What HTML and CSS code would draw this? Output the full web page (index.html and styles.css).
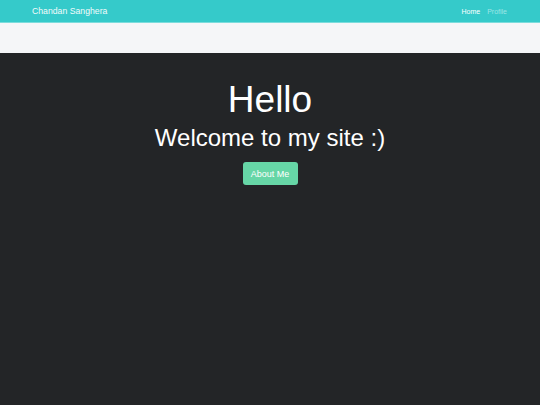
FILE: index.html
```html
<!DOCTYPE html>
<html lang="en">
<head>
    <meta charset="UTF-8">
    <meta name="viewport" content="width=device-width, initial-scale=1.0">
    <title>Chandan Sanghera</title>
    <link rel="stylesheet" href="styles.css">
</head>
<body>

<nav class="navbar">
    <a class="brand" href="#">Chandan Sanghera</a>
    <div class="nav-links">
        <a class="nav-link active" href="#">Home</a>
        <a class="nav-link" href="#">Profile</a>
    </div>
</nav>

<div class="subbar"></div>

<main class="hero">
    <h1>Hello</h1>
    <h2>Welcome to my site :)</h2>
    <button class="about-btn">About Me</button>
</main>

</body>
</html>
```

FILE: styles.css
```css
html, body {
    height: 100%;
}
body {
    margin: 0;
    font-family: 'Liberation Sans', Arial, sans-serif;
    background-color: #232527;
    display: flex;
    flex-direction: column;
}
.navbar {
    background-color: #35caca;
    height: 22px;
    display: flex;
    align-items: center;
    justify-content: space-between;
    padding: 0 33px 0 32px;
    border-bottom: 1px solid #7cdcdc;
}
.brand {
    color: #f2fbfb;
    font-size: 8.7px;
    text-decoration: none;
}
.nav-links {
    display: flex;
    gap: 7px;
}
.nav-link {
    color: #9de6e6;
    font-size: 7px;
    text-decoration: none;
}
.nav-link.active {
    color: #ffffff;
}
.subbar {
    background-color: #f5f6f8;
    height: 30px;
}
.hero {
    flex: 1;
    text-align: center;
    color: #ffffff;
    padding-top: 26px;
}
h1 {
    font-size: 37px;
    font-weight: normal;
    margin: 0;
    line-height: 42px;
}
h2 {
    font-size: 24px;
    font-weight: normal;
    margin: 0;
    line-height: 33px;
}
.about-btn {
    margin-top: 8px;
    background-color: #66d6a6;
    color: #ffffff;
    border: none;
    border-radius: 3px;
    font-family: inherit;
    font-size: 9px;
    width: 55px;
    height: 23px;
    cursor: pointer;
}
```
